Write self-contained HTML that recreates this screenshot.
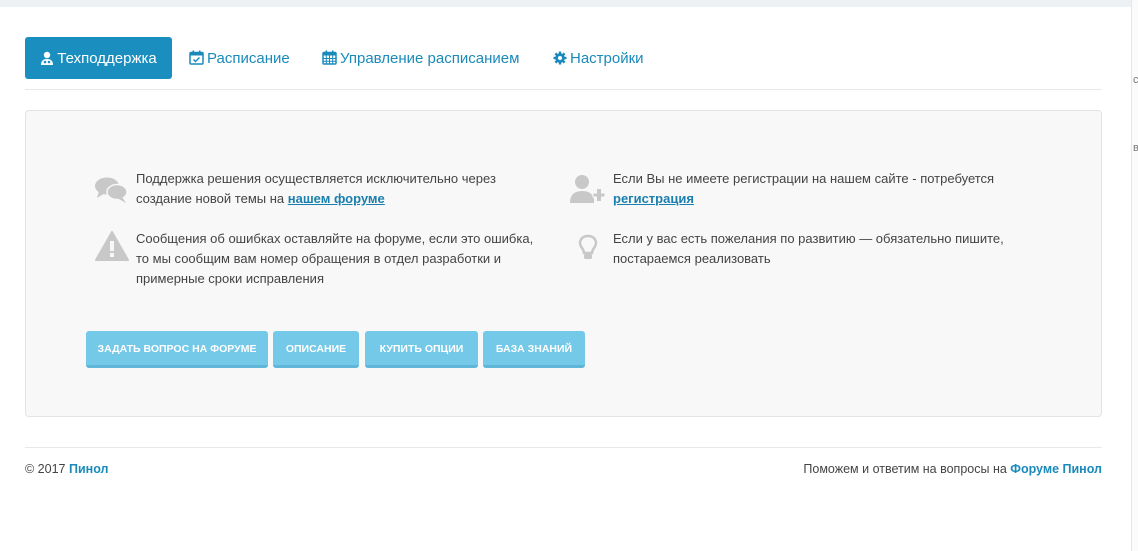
<!DOCTYPE html>
<html><head><meta charset="utf-8"><style>
*{margin:0;padding:0;box-sizing:border-box}
body{width:1138px;height:551px;background:#fff;font-family:"Liberation Sans",sans-serif;color:#444;position:relative;overflow:hidden}
.top{position:absolute;left:0;top:0;width:1131px;height:7px;background:#eef1f4}
.rs{position:absolute;left:1131px;top:0;width:7px;height:551px;background:#fbfbfb;border-left:1px solid #e6e6e6;font-size:11px;color:#777}
.tab{position:absolute;top:37px;height:42px;line-height:44px;font-size:15px;color:#1a8abb;white-space:nowrap}
.tab.act{left:25px;width:147px;background:#1a8fbf;color:#fff;border-radius:3px;text-align:center}
.tab svg{vertical-align:-2px;margin-right:3px}
.hr{position:absolute;left:25px;width:1077px;height:1px;background:#e8e8e8}
.panel{position:absolute;left:25px;top:110px;width:1077px;height:307px;background:#f8f8f8;border:1px solid #e3e3e3;border-radius:4px}
.t{position:absolute;font-size:13px;line-height:20px;color:#444;white-space:nowrap}
.t a{color:#1a7fae;font-weight:bold;text-decoration:underline}
.ic{position:absolute}
.btn{position:absolute;top:331px;height:37px;background:#74c8e8;border-bottom:3px solid #5fb6d8;border-radius:3px;color:#fff;font-size:10.5px;font-weight:bold;text-align:center;line-height:36px}
.f{position:absolute;top:462px;font-size:12.5px;color:#444;white-space:nowrap}
.f b{color:#1a8abb}
</style></head><body>
<div class="top"></div>
<div class="rs"><div style="position:absolute;top:74px;left:1px">с</div><div style="position:absolute;top:142px;left:1px">в</div></div>

<div class="tab act"><svg width="14" height="14" viewBox="0 0 14 14"><circle cx="7" cy="4" r="3.2" fill="#fff"/><path d="M1 14 Q1 8 7 8 Q13 8 13 14Z" fill="#fff"/><circle cx="5" cy="11" r="1.3" fill="#1a8fbf"/><circle cx="9" cy="11" r="1.3" fill="#1a8fbf"/></svg>Техподдержка</div>
<div class="tab" style="left:189px"><svg width="15" height="15" viewBox="0 0 15 15"><rect x="1" y="2.5" width="13" height="11.5" rx="1" fill="none" stroke="#1a8abb" stroke-width="1.5"/><rect x="1" y="2.5" width="13" height="3" fill="#1a8abb"/><rect x="3.5" y="0.5" width="1.6" height="3" fill="#1a8abb"/><rect x="9.9" y="0.5" width="1.6" height="3" fill="#1a8abb"/><path d="M4.5 9.5l2 2 4-4" fill="none" stroke="#1a8abb" stroke-width="1.4"/></svg>Расписание</div>
<div class="tab" style="left:322px"><svg width="15" height="15" viewBox="0 0 15 15"><rect x="1" y="2.5" width="13" height="11.5" rx="1" fill="none" stroke="#1a8abb" stroke-width="1.5"/><rect x="1" y="2.5" width="13" height="3" fill="#1a8abb"/><path d="M1 8.5h13M1 11.2h13M4.3 5v9M7.5 5v9M10.7 5v9" stroke="#1a8abb" stroke-width="1"/><rect x="3.5" y="0.5" width="1.6" height="3" fill="#1a8abb"/><rect x="9.9" y="0.5" width="1.6" height="3" fill="#1a8abb"/></svg>Управление расписанием</div>
<div class="tab" style="left:553px"><svg width="14" height="14" viewBox="0 0 14 14"><g fill="#1a8abb"><circle cx="7" cy="7" r="4.8"/><rect x="5.8" y="0.5" width="2.4" height="13"/><rect x="0.5" y="5.8" width="13" height="2.4"/><rect x="5.8" y="0.5" width="2.4" height="13" transform="rotate(45 7 7)"/><rect x="5.8" y="0.5" width="2.4" height="13" transform="rotate(-45 7 7)"/></g><circle cx="7" cy="7" r="2" fill="#fff"/></svg>Настройки</div>
<div class="hr" style="top:89px"></div>

<div class="panel"></div>
<svg class="ic" style="left:95px;top:177px" width="34" height="28" viewBox="0 0 34 28"><ellipse cx="12" cy="9" rx="12" ry="8.5" fill="#c8c8c8"/><path d="M4 14 L2 21 L10 16Z" fill="#c8c8c8"/><ellipse cx="22" cy="15" rx="10" ry="7.5" fill="#c8c8c8" stroke="#f8f8f8" stroke-width="1.5"/><path d="M27 20 L31 26 L22 21Z" fill="#c8c8c8"/></svg>
<div class="t" style="left:136px;top:169px">Поддержка решения осуществляется исключительно через<br>создание новой темы на <a>нашем форуме</a></div>
<svg class="ic" style="left:95px;top:231px" width="34" height="30" viewBox="0 0 34 30"><path d="M17 1 L33 29 L1 29Z" fill="#c8c8c8" stroke="#c8c8c8" stroke-width="2" stroke-linejoin="round"/><rect x="15" y="10" width="4" height="10" fill="#f8f8f8"/><rect x="15" y="22" width="4" height="4" fill="#f8f8f8"/></svg>
<div class="t" style="left:136px;top:229px">Сообщения об ошибках оставляйте на форуме, если это ошибка,<br>то мы сообщим вам номер обращения в отдел разработки и<br>примерные сроки исправления</div>
<svg class="ic" style="left:570px;top:174px" width="36" height="30" viewBox="0 0 36 30"><circle cx="12" cy="8" r="7" fill="#c8c8c8"/><path d="M0 29 Q0 17 12 17 Q22 17 24 25 L24 29Z" fill="#c8c8c8"/><rect x="23" y="19" width="12" height="4" fill="#c8c8c8" stroke="#f8f8f8" stroke-width="1"/><rect x="27" y="15" width="4" height="12" fill="#c8c8c8"/></svg>
<div class="t" style="left:613px;top:169px">Если Вы не имеете регистрации на нашем сайте - потребуется<br><a>регистрация</a></div>
<svg class="ic" style="left:578px;top:234px" width="20" height="28" viewBox="0 0 20 28"><path d="M10 2 C4 2 2 6 2 9 C2 13 6 15 6 19 L14 19 C14 15 18 13 18 9 C18 6 16 2 10 2Z" fill="none" stroke="#c8c8c8" stroke-width="2.5"/><rect x="6" y="20" width="8" height="5" rx="1.5" fill="#c8c8c8"/></svg>
<div class="t" style="left:613px;top:229px">Если у вас есть пожелания по развитию — обязательно пишите,<br>постараемся реализовать</div>

<div class="btn" style="left:86px;width:182px">ЗАДАТЬ ВОПРОС НА ФОРУМЕ</div>
<div class="btn" style="left:273px;width:86px">ОПИСАНИЕ</div>
<div class="btn" style="left:365px;width:113px">КУПИТЬ ОПЦИИ</div>
<div class="btn" style="left:483px;width:102px">БАЗА ЗНАНИЙ</div>

<div class="hr" style="top:447px"></div>
<div class="f" style="left:25px">© 2017 <b>Пинол</b></div>
<div class="f" style="right:36px">Поможем и ответим на вопросы на <b>Форуме Пинол</b></div>
</body></html>
